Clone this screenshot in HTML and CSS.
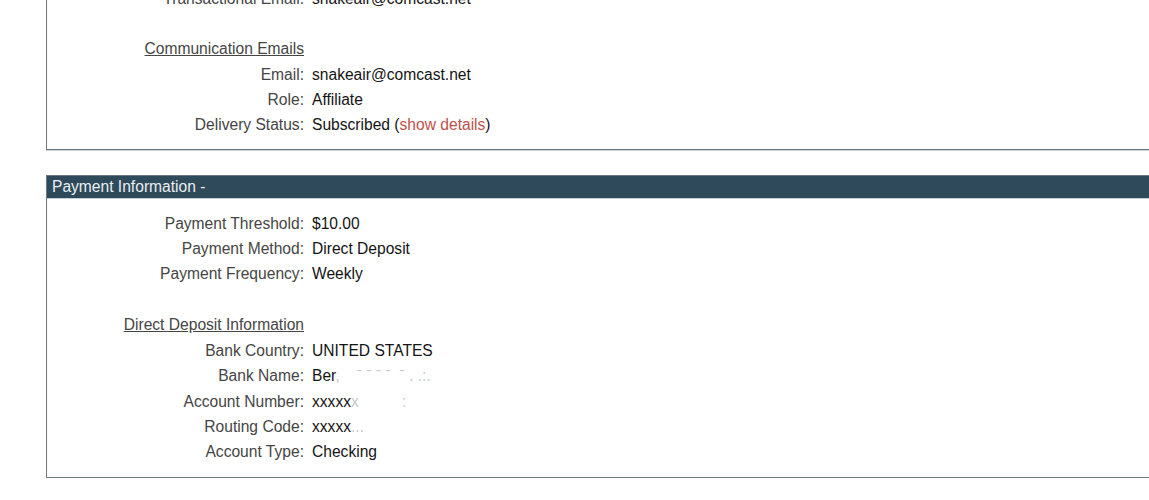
FILE: index.html
```html
<!DOCTYPE html>
<html>
<head>
<meta charset="utf-8">
<link rel="stylesheet" href="styles.css">
</head>
<body>
<div class="page">
  <section class="box box-top">
    <div class="grid">
      <div class="label">Transactional Email:</div><div class="value">snakeair@comcast.net</div>
      <div class="label"></div><div class="value"></div>
      <div class="label"><span class="heading">Communication Emails</span></div><div class="value"></div>
      <div class="label">Email:</div><div class="value">snakeair@comcast.net</div>
      <div class="label">Role:</div><div class="value">Affiliate</div>
      <div class="label">Delivery Status:</div><div class="value">Subscribed (<a class="link" href="#">show details</a>)</div>
    </div>
  </section>

  <section class="box box-pay">
    <div class="bar">Payment Information -</div>
    <div class="grid grid-pay">
      <div class="label">Payment Threshold:</div><div class="value">$10.00</div>
      <div class="label">Payment Method:</div><div class="value">Direct Deposit</div>
      <div class="label">Payment Frequency:</div><div class="value">Weekly</div>
      <div class="label"></div><div class="value"></div>
      <div class="label"><span class="heading">Direct Deposit Information</span></div><div class="value"></div>
      <div class="label">Bank Country:</div><div class="value">UNITED STATES</div>
      <div class="label">Bank Name:</div><div class="value">Ber<span class="faint">,&nbsp;&nbsp;&nbsp;&nbsp;ˉ ˉ ˉ ˉ&nbsp;&nbsp;ˉ . .:.</span></div>
      <div class="label">Account Number:</div><div class="value">xxxxx<span class="faint">x&nbsp;&nbsp;&nbsp;&nbsp;&nbsp;&nbsp;&nbsp;&nbsp;&nbsp;&nbsp;:</span></div>
      <div class="label">Routing Code:</div><div class="value">xxxxx<span class="faint">...</span></div>
      <div class="label">Account Type:</div><div class="value">Checking</div>
    </div>
  </section>
</div>
</body>
</html>
```

FILE: styles.css
```css
html, body {
  margin: 0;
  padding: 0;
  background: #ffffff;
  overflow: hidden;
}

body {
  font-family: "Liberation Sans", Arial, sans-serif;
  font-size: 15.6px;
  color: #1a1a1a;
}

.page {
  padding-left: 46px;
  display: flex;
  flex-direction: column;
}

.box {
  width: 1200px;
  border: 1px solid #6b7782;
  border-right: none;
  box-shadow: 0 1px 0 #c9d0d6;
}

.box-top {
  margin-top: -27px;
  padding-top: 12px;
  padding-bottom: 11px;
}

.box-pay {
  margin-top: 25px;
  padding-bottom: 12px;
}

.bar {
  background: #2f4a5a;
  color: #e9eef1;
  height: 22px;
  line-height: 22px;
  padding-left: 5px;
  border-bottom: 1px solid #c7cfd5;
}

.grid {
  display: grid;
  grid-template-columns: 257px 1fr;
  column-gap: 8px;
  grid-auto-rows: 25.3px;
  align-items: center;
}

.grid-pay {
  padding-top: 12px;
  grid-auto-rows: 25.45px;
}

.label {
  text-align: right;
  color: #454545;
}

.value {
  color: #141414;
}

.heading {
  text-decoration: underline;
  color: #454545;
}

.link {
  color: #c0504a;
  text-decoration: none;
}

.faint {
  color: #c4c8cc;
}
```
